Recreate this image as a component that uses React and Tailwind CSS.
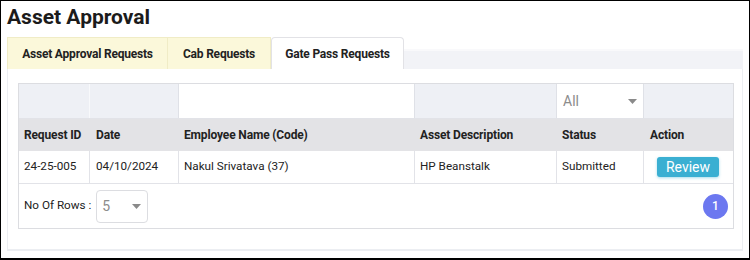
import React from 'react';

const cols = 'grid grid-cols-[71px_89px_236px_142px_87px_90px]';

const rows = [
  { id: '24-25-005', date: '04/10/2024', name: 'Nakul Srivatava (37)', asset: 'HP Beanstalk', status: 'Submitted' },
];

const Caret = () => (
  <svg width="9" height="5" viewBox="0 0 9 5" className="shrink-0">
    <path d="M0 0h9L4.5 5z" fill="#8a8a8a" />
  </svg>
);

export default function App() {
  return (
    <div className="w-[750px] h-[260px] overflow-hidden border border-black border-b-2 bg-white font-['Roboto',sans-serif] text-[#222]">
      <h1 className="pl-[6px] pt-[3px] h-[36px] text-[21px] leading-[26px] font-bold text-[#1b1b1b]">Asset Approval</h1>

      <div className="mx-[6px] flex h-[32px] text-[12px] font-bold tracking-[-0.2px]">
        <div className="w-[161px] flex items-center justify-center bg-[#fbf8da] border border-b-0 border-[#f0ecc6]">Asset Approval Requests</div>
        <div className="w-[103px] flex items-center justify-center bg-[#fbf8da] border-t border-r border-[#f0ecc6]">Cab Requests</div>
        <div className="w-[133px] flex items-center justify-center bg-white border border-b-0 border-[#e2e2e6] rounded-t-[4px]">Gate Pass Requests</div>
        <div className="flex-1 self-end h-[20px] bg-[#f2f3f7] border-t-2 border-[#f9f9fb]" />
      </div>

      <div className="mx-[6px] w-[736px] h-[182px] border border-t-0 border-b-2 border-[#eceef2] bg-white pl-[10px] pt-[14px]">
        <div className="w-[716px] border border-[#dcdde1] text-[11.7px]">
          <div className={`${cols} h-[35px] bg-[#eef0f5] border-b border-[#e2e3e8]`}>
            <div className="border-r border-[#f8f9fb]" />
            <div className="border-r border-[#dfe1e7]" />
            <div className="border-r border-[#dfe1e7] bg-white" />
            <div className="border-r border-[#dfe1e7]" />
            <div className="border-r border-[#dfe1e7] bg-white flex items-center justify-between pl-[6px] pr-[6px]">
              <span className="text-[14px] text-[#8c8c8c]">All</span>
              <Caret />
            </div>
            <div />
          </div>

          <div className={`${cols} h-[32px] bg-[#e3e3e6] font-bold text-[12px] tracking-[-0.15px] items-center`}>
            <div className="pl-[5px]">Request ID</div>
            <div className="pl-[6px]">Date</div>
            <div className="pl-[5px]">Employee Name (Code)</div>
            <div className="pl-[5px]">Asset Description</div>
            <div className="pl-[5px]">Status</div>
            <div className="pl-[6px]">Action</div>
          </div>

          {rows.map((r) => (
            <div key={r.id} className={`${cols} h-[33px] border-b border-[#e2e3e8]`}>
              <div className="pl-[5px] flex items-center border-r border-[#e2e3e8]">{r.id}</div>
              <div className="pl-[6px] flex items-center border-r border-[#e2e3e8]">{r.date}</div>
              <div className="pl-[5px] flex items-center border-r border-[#e2e3e8]">{r.name}</div>
              <div className="pl-[5px] flex items-center border-r border-[#e2e3e8]">{r.asset}</div>
              <div className="pl-[5px] flex items-center border-r border-[#e2e3e8]">{r.status}</div>
              <div className="pl-[13px] flex items-center">
                <button className="w-[62px] h-[20px] rounded-[3px] bg-[#3aafd2] text-white text-[14px] leading-none shadow-[0_1px_3px_rgba(58,175,210,0.45)]">Review</button>
              </div>
            </div>
          ))}

          <div className="h-[44px] flex items-center justify-between pl-[5px] pr-[5px]">
            <div className="flex items-center gap-[5px]">
              <span className="text-[11.7px]">No Of Rows :</span>
              <div className="w-[52px] h-[33px] border border-[#dcdde1] rounded-[4px] flex items-center justify-between pl-[5px] pr-[6px]">
                <span className="text-[14px] text-[#8c8c8c]">5</span>
                <Caret />
              </div>
            </div>
            <div className="w-[25px] h-[25px] rounded-full bg-[#6c78f0] text-white text-[12px] font-medium flex items-center justify-center">1</div>
          </div>
        </div>
      </div>
    </div>
  );
}
